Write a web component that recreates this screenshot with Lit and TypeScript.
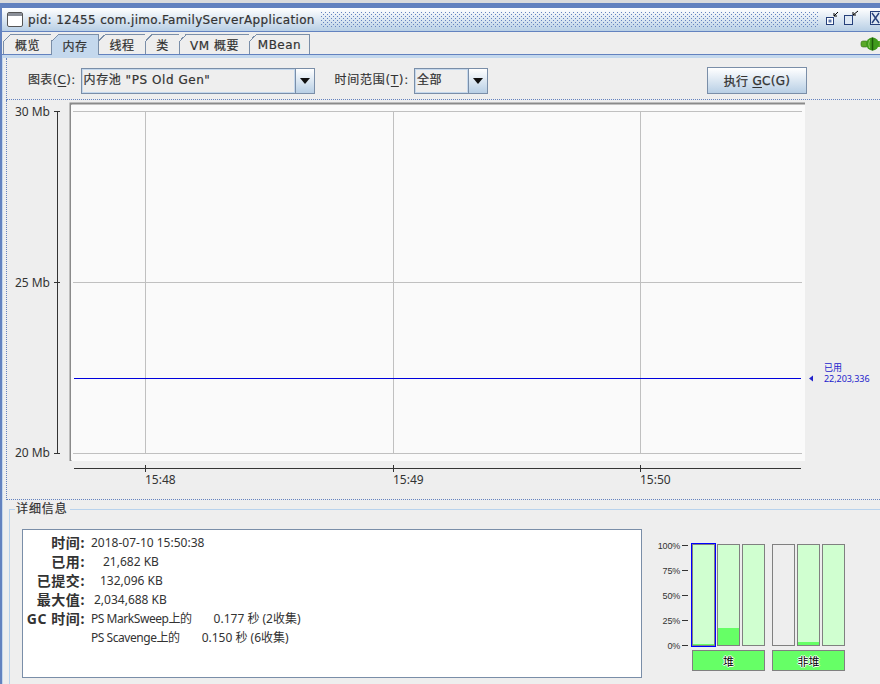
import { LitElement, css, html, svg } from 'lit'
import { customElement } from 'lit/decorators.js'

const TABS = ['概览', '内存', '线程', '类', 'VM 概要', 'MBean']
const TAB_WIDTHS = [49, 48, 48, 35, 71, 61]
const GRID_X = [145, 393, 640]
const GRID_Y = [111, 282, 453]

const DETAILS = [
  ['时间:', '2018-07-10 15:50:38', 0],
  ['已用:', '21,682 KB', 12],
  ['已提交:', '132,096 KB', 9],
  ['最大值:', '2,034,688 KB', 3],
  ['GC 时间:', 'PS MarkSweep上的', 0, '0.177 秒 (2收集)'],
  ['', 'PS Scavenge上的', 0, '0.150 秒 (6收集)'],
] as const

// share used, null means an empty pool drawn without the pale fill
const HEAP = [0.01, 0.17, 0]
const NON_HEAP = [null, 0.03, 0]

@customElement('app-root')
export class AppRoot extends LitElement {
  static override styles = css`
    :host {
      display: block;
      width: 880px;
      height: 684px;
      overflow: hidden;
      background: #eeeeee;
      color: #333;
      font-family: 'DejaVu Sans', 'Noto Sans CJK SC', sans-serif;
      font-size: 12px;
    }
    .strip {
      height: 3px;
      background: #dcdcdc;
    }
    .window {
      height: 681px;
      border-top: 5px solid #6382bf;
      border-left: 2px solid #6382bf;
      box-sizing: border-box;
      display: flex;
      flex-direction: column;
    }
    .title {
      height: 24px;
      flex: none;
      box-sizing: border-box;
      border-bottom: 1px solid #6382bf;
      background: linear-gradient(#ffffff, #b8cfe5);
      display: flex;
      align-items: center;
      padding-left: 5px;
      color: #333;
    }
    .title-text {
      margin-left: 5px;
      letter-spacing: 0.34px;
      white-space: nowrap;
      -webkit-text-stroke: 0.2px #333;
    }
    .dots {
      flex: 1;
      height: 16px;
      margin: 0 8px 0 6px;
      background-image: radial-gradient(circle at 0.5px 0.5px, #6382bf 0.6px, transparent 0.8px),
        radial-gradient(circle at 0.5px 0.5px, #6382bf 0.6px, transparent 0.8px);
      background-size: 4px 4px;
      background-position: 0 0, 2px 2px;
    }
    .controls {
      align-self: flex-start;
      margin-top: 2px;
      flex: none;
    }
    .tabs {
      height: 23px;
      flex: none;
      box-sizing: border-box;
      display: flex;
      align-items: flex-end;
      padding-left: 1px;
      border-bottom: 1px solid #6382bf;
      position: relative;
    }
    .tab {
      position: relative;
      box-sizing: border-box;
      height: 20px;
      border: 1px solid #7a8ea8;
      border-bottom: none;
      margin-right: -1px;
      display: flex;
      align-items: center;
      justify-content: center;
      background: #eeeeee;
      letter-spacing: 0.5px;
      -webkit-text-stroke: 0.2px #333;
    }
    .tab::before {
      content: '';
      position: absolute;
      left: -1px;
      top: -1px;
      width: 7px;
      height: 7px;
      background: linear-gradient(135deg, #eeeeee 50%, #7a8ea8 50%, #7a8ea8 62%, transparent 62%);
    }
    .tab.active {
      background: #c4d8ed;
      height: 21px;
      margin-bottom: -1px;
      z-index: 1;
    }
    .tab.active::before {
      background: linear-gradient(135deg, #eeeeee 50%, #7a8ea8 50%, #7a8ea8 62%, #c4d8ed 62%);
    }
    .plug {
      position: absolute;
      right: 0;
      top: 4px;
    }
    .panel {
      flex: 1;
      border-top: 3px solid #c4d8ed;
      border-left: 1px solid #c4d8ed;
      padding-left: 3px;
      display: flex;
      flex-direction: column;
      min-height: 0;
    }
    .toolbar {
      height: 42px;
      flex: none;
      box-sizing: border-box;
      padding: 10px 0 0 21px;
      display: flex;
      align-items: flex-start;
      border-bottom: 1px dotted #6382bf;
      border-left: 1px dotted #6382bf;
    }
    .field-label {
      height: 26px;
      line-height: 25px;
      letter-spacing: 0.3px;
      white-space: nowrap;
      -webkit-text-stroke: 0.15px #333;
    }
    .field-label.time {
      margin-left: 20px;
      letter-spacing: 0.7px;
    }
    .combo {
      height: 26px;
      box-sizing: border-box;
      border: 1px solid #7a8ea8;
      display: flex;
      margin-left: 5px;
    }
    .combo.wide {
      width: 234px;
    }
    .combo.narrow {
      width: 74px;
    }
    .combo-text {
      flex: 1;
      border: 1px solid #c4d8ed;
      padding-left: 1px;
      line-height: 21px;
      letter-spacing: 0.55px;
      white-space: nowrap;
      -webkit-text-stroke: 0.2px #333;
    }
    .combo-arrow {
      width: 18px;
      border-left: 1px solid #7a8ea8;
      background: linear-gradient(#ffffff, #b8cfe5);
      display: flex;
      align-items: center;
      justify-content: center;
    }
    .combo-arrow::after {
      content: '';
      border: 5px solid transparent;
      border-top: 6px solid #111;
      border-bottom: none;
    }
    .gc {
      margin-left: 219px;
      margin-top: -1px;
      width: 100px;
      height: 27px;
      box-sizing: border-box;
      border: 1px solid #7a8ea8;
      background: linear-gradient(#ffffff, #b8cfe5);
      display: flex;
      align-items: center;
      justify-content: center;
      letter-spacing: 0.3px;
      white-space: nowrap;
      -webkit-text-stroke: 0.25px #333;
    }
    u {
      text-underline-offset: 2px;
    }
    .chart {
      display: block;
      width: 875px;
      height: 399px;
      flex: none;
      border-left: 1px dotted #6382bf;
      border-bottom: 1px dotted #6382bf;
    }
    .chart text {
      font-family: 'Noto Sans', 'Noto Sans CJK SC', sans-serif;
      font-size: 12px;
      fill: #333;
    }
    .chart text.small {
      font-size: 9px;
      letter-spacing: -0.05px;
      fill: #2222cc;
    }
    .details {
      flex: 1;
      margin: 9px 0 0 3px;
      border-top: 1px solid #b8d2ec;
      border-left: 1px solid #b8d2ec;
      position: relative;
      display: flex;
      padding: 19px 0 0 12px;
      min-height: 0;
    }
    .legend {
      position: absolute;
      left: 5px;
      top: -8px;
      padding: 0 2px 0 1px;
      background: #eeeeee;
      letter-spacing: 0.9px;
      line-height: 15px;
      -webkit-text-stroke: 0.2px #333;
    }
    .info {
      width: 620px;
      height: 149px;
      box-sizing: border-box;
      background: #fff;
      border: 1px solid #7a8ea8;
      padding: 3px 0 0 0;
    }
    .row {
      display: flex;
      height: 19px;
      line-height: 19px;
      align-items: center;
      white-space: nowrap;
    }
    .row-label {
      width: 62px;
      text-align: right;
      font-weight: 700;
      letter-spacing: 0.6px;
      font-family: 'Noto Sans', 'Noto Sans CJK SC', sans-serif;
      font-size: 14px;
    }
    .row-value {
      margin-left: 6px;
      font-family: 'Noto Sans', 'Noto Sans CJK SC', sans-serif;
      font-size: 12px;
      display: flex;
      width: 0;
    }
    .collector {
      letter-spacing: -0.45px;
    }
    .row-extra {
      margin-left: 22px;
    }
    .meter {
      display: flex;
    }
    .scale {
      width: 48px;
      height: 101px;
      margin-top: 16px;
      display: flex;
      flex-direction: column;
      justify-content: space-between;
    }
    .scale-row {
      height: 1px;
      display: flex;
      align-items: center;
      justify-content: flex-end;
      font-family: 'Liberation Sans', sans-serif;
      font-size: 9px;
      letter-spacing: -0.2px;
      gap: 2px;
    }
    .scale-tick {
      width: 6px;
      height: 1px;
      background: #333;
      flex: none;
      margin-right: 2px;
    }
    .group {
      display: flex;
      flex-direction: column;
      margin-left: 2px;
    }
    .group + .group {
      margin-left: 7px;
    }
    .cols {
      margin-top: 15px;
      display: flex;
      gap: 2px;
      height: 102px;
    }
    .col {
      width: 23px;
      box-sizing: border-box;
      border: 1px solid #808080;
      background: #d0ffd0;
      display: flex;
      align-items: flex-end;
    }
    .col.empty {
      background: #eeeeee;
    }
    .col.selected {
      outline: 1px solid #0000ff;
    }
    .fill {
      width: 100%;
      background: #66ff66;
    }
    .tag {
      margin-top: 4px;
      height: 21px;
      box-sizing: border-box;
      border: 1px solid #808080;
      background: #66ff66;
      display: flex;
      align-items: center;
      justify-content: center;
      color: #000;
      font-size: 11px;
      text-shadow: 1px 0 #fff, -1px 0 #fff, 0 1px #fff, 0 -1px #fff;
    }
  `

  private windowControls() {
    return html`
      <svg class="controls" width="54" height="18" viewBox="0 0 54 18">
        <rect x="0.5" y="7.5" width="7" height="7" fill="#fff" stroke="#26407a" />
        <rect x="2.5" y="9.5" width="3" height="3" fill="#5c78ad" />
        <path d="M8 6 L12 2 M8 6 h3 M8 6 v-3" stroke="#000" fill="none" />
        <rect x="18.5" y="5.5" width="8" height="9" fill="#dfe9f4" stroke="#26407a" />
        <path d="M27 5 L32 1 M27 5 h3 M27 5 v-3" stroke="#000" fill="none" />
        <rect x="44.5" y="1.5" width="12" height="13" fill="#dfe9f4" stroke="#26407a" />
        <path d="M46 3 L53 13 M53 3 L46 13" stroke="#26407a" fill="none" stroke-width="1.4" />
      </svg>
    `
  }

  private chart() {
    return html`
      <svg class="chart" viewBox="7 100 875 399" width="875" height="399">
        <rect x="70" y="103" width="735" height="358" fill="#fafafa" />
        <path d="M70.5 461 V103.5 H805" fill="none" stroke="#8a8a8a" stroke-width="2" />
        <rect x="71" y="105" width="733" height="355" fill="#fafafa" />
        ${GRID_Y.map((y) => svg`<line x1="73" x2="802" y1=${y + 0.5} y2=${y + 0.5} stroke="#c0c0c0" />`)}
        ${GRID_X.map((x) => svg`<line x1=${x + 0.5} x2=${x + 0.5} y1="111" y2="454" stroke="#c0c0c0" />`)}
        <rect x="74" y="378" width="727" height="1" fill="#0000dd" />
        <line x1="57.5" x2="57.5" y1="111" y2="453" stroke="#333" />
        ${GRID_Y.map((y, i) => svg`
          <line x1="54" x2="60" y1=${y + 0.5} y2=${y + 0.5} stroke="#333" />
          <text x="50" y=${i === 2 ? y + 4 : y + 5} text-anchor="end">${['30 Mb', '25 Mb', '20 Mb'][i]}</text>
        `)}
        <line x1="74" x2="801" y1="468.5" y2="468.5" stroke="#333" />
        ${GRID_X.map((x, i) => svg`
          <line x1=${x + 0.5} x2=${x + 0.5} y1="465" y2="472" stroke="#333" />
          <text x=${x} y="484">${['15:48', '15:49', '15:50'][i]}</text>
        `)}
        <path d="M809 378.5 L813 375.5 V381.5 Z" fill="#2222cc" />
        <text class="small" x="824" y="370.5">已用</text>
        <text class="small" x="824" y="381.5">22,203,336</text>
      </svg>
    `
  }

  private column(used: number | null, selected = false) {
    const classes = `col${used === null ? ' empty' : ''}${selected ? ' selected' : ''}`
    return html`
      <div class=${classes}>
        <div class="fill" style="height: ${(used ?? 0) * 100}%"></div>
      </div>
    `
  }

  override render() {
    return html`
      <div class="strip"></div>
      <div class="window">
        <div class="title">
          <svg width="16" height="15" viewBox="0 0 16 15">
            <rect x="0.5" y="0.5" width="15" height="14" rx="1.5" fill="#fff" stroke="#555" />
            <rect x="1" y="1" width="14" height="3" fill="#8a8f98" />
          </svg>
          <span class="title-text">pid: 12455 com.jimo.FamilyServerApplication</span>
          <div class="dots"></div>
          ${this.windowControls()}
        </div>
        <div class="tabs">
          ${TABS.map(
            (t, i) => html`<div class="tab ${i === 1 ? 'active' : ''}" style="width: ${TAB_WIDTHS[i]}px">${t}</div>`,
          )}
          <svg class="plug" width="20" height="16" viewBox="0 0 20 16">
            <rect x="1" y="5" width="7" height="6" rx="2" fill="#5aa82a" stroke="#2f6a12" stroke-width="0.6" />
            <rect x="14" y="5" width="6" height="6" fill="#5aa82a" />
            <circle cx="12.5" cy="8" r="6.5" fill="#3f9a1c" />
            <path d="M12.5 1.5 V14.5" stroke="#1c5a0a" stroke-width="1.5" />
            <path d="M9.5 4 Q8 8 9.5 12" stroke="#8fd060" fill="none" />
          </svg>
        </div>
        <div class="panel">
          <div class="toolbar">
            <span class="field-label">图表(<u>C</u>):</span>
            <div class="combo wide">
              <div class="combo-text">内存池 "PS Old Gen"</div>
              <div class="combo-arrow"></div>
            </div>
            <span class="field-label time">时间范围(<u>T</u>):</span>
            <div class="combo narrow">
              <div class="combo-text">全部</div>
              <div class="combo-arrow"></div>
            </div>
            <div class="gc">执行&nbsp;<u>G</u>C(G)</div>
          </div>
          ${this.chart()}
          <div class="details">
            <span class="legend">详细信息</span>
            <div class="info">
              ${DETAILS.map(
                ([label, value, pad, extra]) => html`
                  <div class="row">
                    <span class="row-label">${label}</span>
                    <span class="row-value" style="padding-left: ${pad}px">
                      <span class=${extra ? 'collector' : ''}>${value}</span>
                      ${extra ? html`<span class="row-extra">${extra}</span>` : ''}
                    </span>
                  </div>
                `,
              )}
            </div>
            <div class="meter">
              <div class="scale">
                ${['100%', '75%', '50%', '25%', '0%'].map(
                  (p) => html`<div class="scale-row">${p}<span class="scale-tick"></span></div>`,
                )}
              </div>
              <div class="group">
                <div class="cols">${HEAP.map((u, i) => this.column(u, i === 0))}</div>
                <div class="tag">堆</div>
              </div>
              <div class="group">
                <div class="cols">${NON_HEAP.map((u) => this.column(u))}</div>
                <div class="tag">非堆</div>
              </div>
            </div>
          </div>
        </div>
      </div>
    `
  }
}
